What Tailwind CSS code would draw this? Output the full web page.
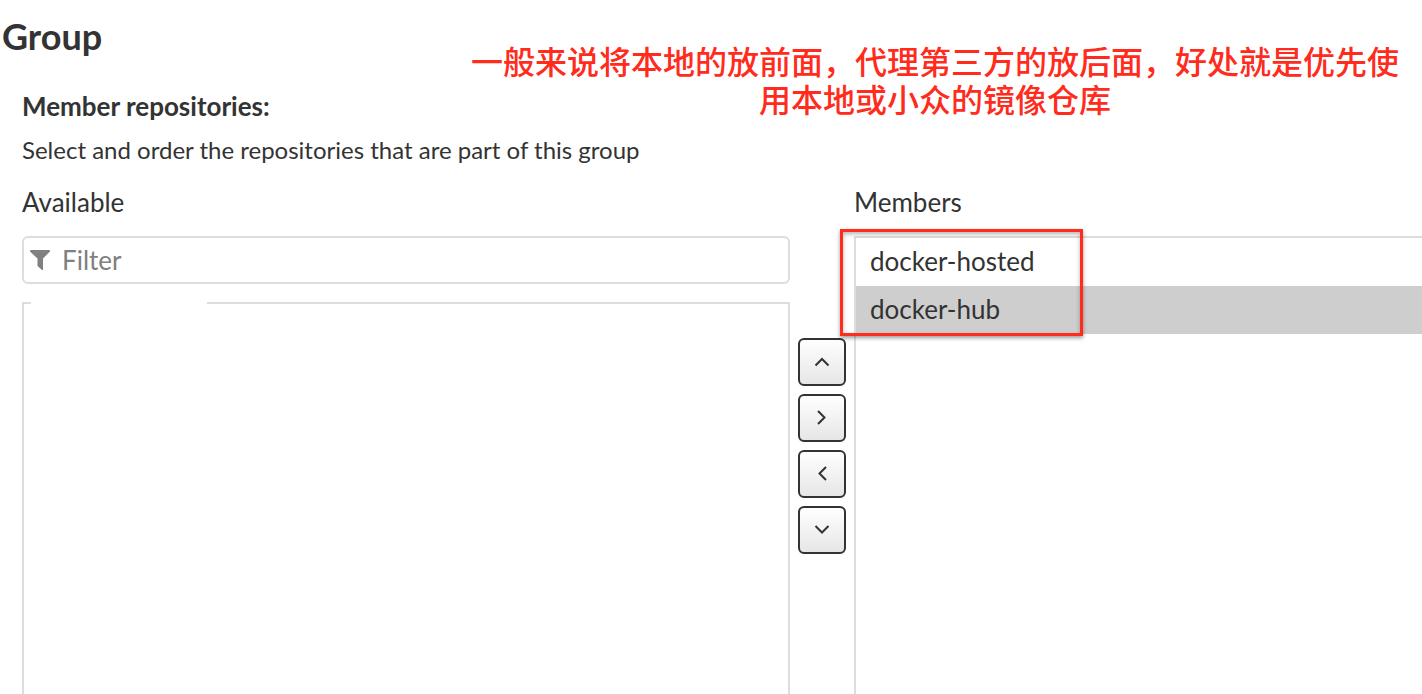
<!DOCTYPE html>
<html lang="en">
<head>
<meta charset="utf-8">
<meta name="viewport" content="width=device-width, initial-scale=1">
<title>Group</title>
<script src="https://cdn.jsdelivr.net/npm/@tailwindcss/browser@4"></script>
</head>
<body class="bg-white text-[#333333] font-['Lato','Noto_Sans_CJK_SC',sans-serif]">
<main class="relative flex min-h-screen flex-col overflow-hidden pt-4">
  <h1 class="pl-[2px] text-4xl leading-10 font-bold">Group</h1>
  <p lang="zh-CN" class="absolute top-[41px] right-[23px] w-[928px] text-center text-[32px] leading-[38px] font-medium text-[#ff2b1c] font-['Noto_Sans_CJK_SC',sans-serif]">一般来说将本地的放前面，代理第三方的放后面，好处就是优先使用本地或小众的镜像仓库</p>

  <section class="flex flex-1 flex-col pt-8 pl-[22px]">
    <h2 class="text-[26px] leading-9 font-bold">Member repositories:</h2>
    <p class="mt-2 text-2xl leading-9">Select and order the repositories that are part of this group</p>

    <div class="mt-4 grid flex-1 grid-cols-[minmax(0,768fr)_48px_minmax(0,568fr)] gap-x-2">
      <div class="flex flex-col">
        <label for="filter" class="text-[26px] leading-9">Available</label>
        <div class="mt-4 flex h-12 items-center gap-3 rounded-md border-2 border-[#dddddd] px-[6px]">
          <svg class="size-5 shrink-0" viewBox="0 0 20 20" fill="#808080" aria-hidden="true"><path d="M0.5 0H19.5Q20.5 1 19.5 2L13 8.500V20H12L7.500 16V8.500L0.500 2Q-.5 1 .5 0Z"/></svg>
          <input id="filter" type="text" placeholder="Filter" class="min-w-0 flex-1 text-[26px] leading-9 outline-none placeholder:text-[#808080]">
        </div>
        <div class="relative mt-[18px] flex-1 border-x-2 border-t-2 border-[#dddddd]" role="listbox" aria-label="Available repositories">
          <div class="absolute -top-[2px] left-[7px] h-[2px] w-44 bg-white"></div>
        </div>
      </div>

      <div class="flex flex-col gap-2 pt-[154px]">
        <button type="button" aria-label="Move up" class="flex size-12 items-center justify-center rounded-md border-2 border-[#333333] bg-linear-to-b from-white to-[#e6e6e6]">
          <svg class="size-4" viewBox="0 0 16 16" fill="none" stroke="#333333" stroke-width="2" aria-hidden="true"><path d="M1.500 11.500L8 5L14.500 11.500"/></svg>
        </button>
        <button type="button" aria-label="Add to members" class="flex size-12 items-center justify-center rounded-md border-2 border-[#333333] bg-linear-to-b from-white to-[#e6e6e6]">
          <svg class="size-4" viewBox="0 0 16 16" fill="none" stroke="#333333" stroke-width="2" aria-hidden="true"><path d="M4 1L10.500 7.500L4 14"/></svg>
        </button>
        <button type="button" aria-label="Remove from members" class="flex size-12 items-center justify-center rounded-md border-2 border-[#333333] bg-linear-to-b from-white to-[#e6e6e6]">
          <svg class="size-4" viewBox="0 0 16 16" fill="none" stroke="#333333" stroke-width="2" aria-hidden="true"><path d="M12 1L5.500 7.500L12 14"/></svg>
        </button>
        <button type="button" aria-label="Move down" class="flex size-12 items-center justify-center rounded-md border-2 border-[#333333] bg-linear-to-b from-white to-[#e6e6e6]">
          <svg class="size-4" viewBox="0 0 16 16" fill="none" stroke="#333333" stroke-width="2" aria-hidden="true"><path d="M1.500 4L8 10.500L14.500 4"/></svg>
        </button>
      </div>

      <div class="flex flex-col">
        <h3 id="members" class="text-[26px] leading-9">Members</h3>
        <div class="relative mt-4 flex-1 border-t-2 border-l-2 border-[#dddddd]">
          <ul role="listbox" aria-labelledby="members" class="text-[26px]">
            <li role="option" aria-selected="false" class="h-12 pl-[14px] leading-[46px]">docker-hosted</li>
            <li role="option" aria-selected="true" class="h-12 bg-[#cecece] pl-[14px] leading-[46px]">docker-hub</li>
          </ul>
          <div class="pointer-events-none absolute -top-[9px] -left-4 h-[107px] w-[243px] border-3 border-[#ff2b1c] shadow-[0_2px_4px_rgba(0,0,0,0.4),inset_0_2px_4px_rgba(0,0,0,0.3)]"></div>
        </div>
      </div>
    </div>
  </section>
</main>
</body>
</html>
